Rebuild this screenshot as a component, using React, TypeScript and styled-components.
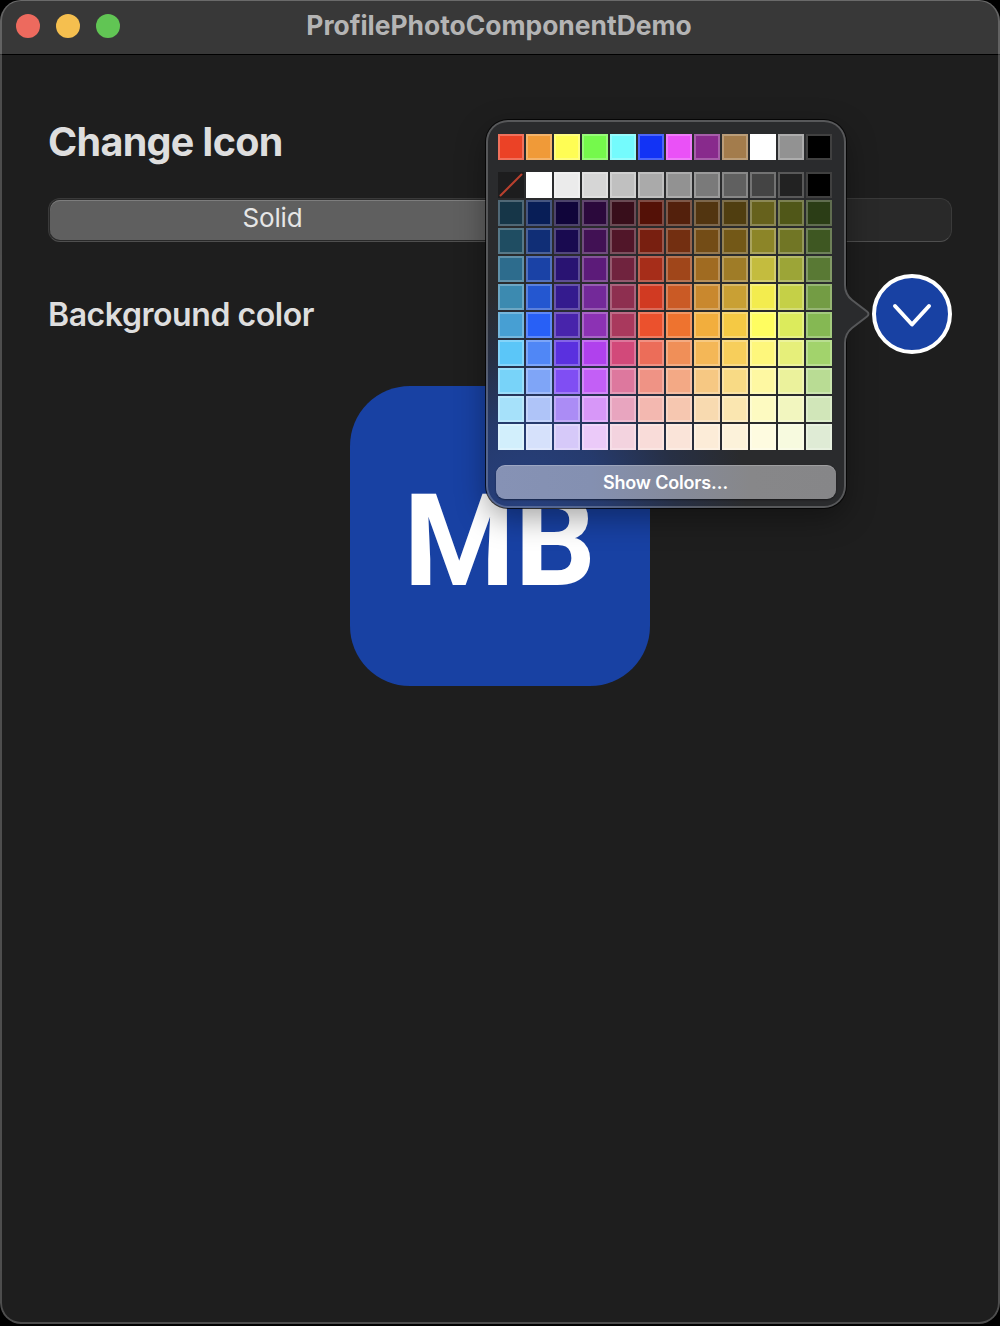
import React from "react";
import styled, { createGlobalStyle } from "styled-components";

const GlobalStyle = createGlobalStyle`
  *, *::before, *::after { box-sizing: border-box; }
  html, body { margin: 0; padding: 0; background: #000; }
  body { font-family: Inter, "Liberation Sans", sans-serif; -webkit-font-smoothing: antialiased; }
`;

const brand = "#1841a3";

const Desktop = styled.div`
  width: 1000px;
  height: 1326px;
  background: #000;
  overflow: hidden;
`;

const Window = styled.main`
  position: relative;
  width: 1000px;
  height: 1324px;
  border-radius: 21px;
  overflow: hidden;
  background: #1e1e1e;
  display: flex;
  flex-direction: column;

  &::after {
    content: "";
    position: absolute;
    inset: 0;
    border: 2px solid rgba(255, 255, 255, 0.21);
    border-top: 1px solid rgba(255, 255, 255, 0.25);
    border-radius: 21px;
    pointer-events: none;
  }
`;

const TitleBar = styled.header`
  flex: none;
  height: 55px;
  padding: 0 16px 3px;
  display: grid;
  grid-template-columns: 104px 1fr 106px;
  align-items: center;
  background: #383838;
  border-bottom: 1px solid #000;
`;

const Lights = styled.div`
  display: flex;
  gap: 16px;
`;

const Light = styled.span<{ $color: string }>`
  width: 24px;
  height: 24px;
  border-radius: 50%;
  background: ${(p) => p.$color};
`;

const Title = styled.h1`
  margin: 0;
  padding-bottom: 2px;
  text-align: center;
  font-size: 26.4px;
  line-height: 32px;
  font-weight: 700;
  color: #b4b4b4;
  white-space: nowrap;
`;

const Content = styled.section`
  padding: 65px 48px 0;
  display: flex;
  flex-direction: column;
`;

const Heading = styled.h2`
  margin: 0;
  font-size: 39.5px;
  line-height: 44px;
  font-weight: 700;
  letter-spacing: -0.7px;
  color: #dedede;
`;

const Segmented = styled.div`
  margin-top: 34px;
  height: 44px;
  padding: 1px;
  display: grid;
  grid-template-columns: 1fr 1fr;
  border: 1px solid #3a3a3a;
  border-bottom-color: #4f4f4f;
  border-radius: 12px;
  background: #292929;
`;

const Segment = styled.button<{ $active?: boolean }>`
  border: 0;
  padding: 0 5px 5px 0;
  border-radius: 10px;
  font: 400 26px/32px Inter, "Liberation Sans", sans-serif;
  letter-spacing: -0.2px;
  color: #e6e6e6;
  background: ${(p) => (p.$active ? "#5f5f5f" : "transparent")};
  box-shadow: ${(p) => (p.$active ? "inset 0 1px 0 #7d7d7d" : "none")};
`;

const SettingRow = styled.div`
  margin-top: 32px;
  height: 80px;
  display: flex;
  align-items: center;
  justify-content: space-between;
`;

const SettingLabel = styled.span`
  padding-top: 2px;
  font-size: 32px;
  line-height: 40px;
  font-weight: 600;
  letter-spacing: -0.43px;
  color: #dedede;
`;

const ColorWell = styled.button`
  width: 80px;
  height: 80px;
  padding: 2px 0 0;
  border: 4px solid #fff;
  border-radius: 50%;
  background: ${brand};
  display: flex;
  align-items: center;
  justify-content: center;
`;

const Avatar = styled.div`
  align-self: center;
  margin-top: 32px;
  width: 300px;
  height: 300px;
  border-radius: 60px;
  background: ${brand};
  color: #fff;
  display: flex;
  align-items: center;
  justify-content: center;
  font-family: Roboto, Inter, sans-serif;
  font-size: 127.5px;
  line-height: 150px;
  font-weight: 700;
  letter-spacing: -0.5px;
  padding: 12px 1px 0 0;
`;

const Popover = styled.aside`
  position: absolute;
  left: 486px;
  top: 120px;
  width: 360px;
  height: 388px;
  padding: 12px 8px 7px;
  display: flex;
  flex-direction: column;
  border: 2px solid rgba(255, 255, 255, 0.215);
  border-radius: 22px;
  background:
    radial-gradient(ellipse 220px 205px at 40px 375px, rgba(38, 65, 130, 0.95) 0%, rgba(37, 61, 120, 0.85) 35%, rgba(36, 52, 92, 0.5) 68%, rgba(43, 44, 47, 0) 100%),
    #2a2b2d;
  background-origin: border-box;
  box-shadow: 0 0 0 1px rgba(0, 0, 0, 0.75), 0 10px 30px rgba(0, 0, 0, 0.36);
`;

const Arrow = styled.svg`
  position: absolute;
  left: 354px;
  top: 155px;
`;

const Swatches = styled.div`
  display: grid;
  grid-template-columns: repeat(12, 26px);
  grid-auto-rows: 26px;
  gap: 2px;
  margin-left: 2px;

  & + & { margin-top: 12px; }
`;

const Swatch = styled.span<{ $color: string }>`
  background: ${(p) => p.$color};
  border: 2px solid rgba(255, 255, 255, 0.25);
`;

const NoColor = styled.span`
  display: flex;
  background: #1d1d1e;
`;

const ShowColors = styled.button`
  margin-top: 15px;
  height: 34px;
  width: 340px;
  padding: 2px 1px 0 0;
  border: 0;
  border-radius: 9px;
  background: linear-gradient(90deg, #8692b5 0%, #8490b1 28%, #858a99 55%, #878789 75%, #868688 100%);
  box-shadow: inset 0 1px 0 rgba(255, 255, 255, 0.2), 0 1px 2px rgba(0, 0, 0, 0.45);
  color: #fff;
  font: 600 18px/22px Inter, "Liberation Sans", sans-serif;
  letter-spacing: -0.18px;
`;

const basics = "eb4226 f09a38 fffd54 75f94c 74fbfd 1233f5 ea51f7 882a8c a37c4c ffffff 929292 000000".split(" ");

const palette = [
  "ffffff ebebeb d6d6d6 c0c0c0 aaaaaa 929292 7a7a7a 606060 444444 222222 000000",
  "163648 081e57 10053a 2b093c 380e1b 541107 53200c 523510 503e10 66611c 505718 2b3d16",
  "1f4d62 102e76 190a50 411154 511629 781f10 732f11 734c16 735817 8c8528 717625 3e5722",
  "2d6c8d 1a42a6 291372 5c1b79 70233e a62d19 a0461a a06b21 9f7c27 c4bc3e 9ca537 597934",
  "3c8ab0 2457d0 341b8e 732999 8e2f50 d13a22 ca5a25 c9882e c9a034 f3ec4e c5d047 739c44",
  "479fd3 2860f6 4824ab 8c32b4 a9395d eb512d ee732f f2ae3d f5c944 fffd60 dceb5c 85b853",
  "5bc6f8 5087f6 5a30df b041ed d2497a ec6d59 f08f58 f4b757 f7ce5b fef77c e6ef7a a2d36c",
  "78d3f9 7fa5f7 804ef3 c35ff6 dd789e ef9385 f3a985 f6c883 f8da85 fef8a2 ebf29c b9dc94",
  "a6e1fa afc4f8 ab8cf5 d797f8 e8a5bf f3b8b0 f6c7b0 f8dab0 fae6b0 fdfac1 f2f6bf d1e6b9",
  "d2effc d6e1fb d6c9f9 ebcaf9 f3d3df f9dcd9 fae4d9 fcecd8 fcf2da fefbe0 f7fadf dfebd5",
].map((row) => row.split(" "));

const colors = palette.flat();

export default function App() {
  return (
    <Desktop>
      <GlobalStyle />
      <Window>
        <TitleBar>
          <Lights>
            <Light $color="#ed6a5e" />
            <Light $color="#f5bf4f" />
            <Light $color="#61c554" />
          </Lights>
          <Title>ProfilePhotoComponentDemo</Title>
        </TitleBar>
        <Content>
          <Heading>Change Icon</Heading>
          <Segmented>
            <Segment $active>Solid</Segment>
            <Segment aria-label="Gradient" />
          </Segmented>
          <SettingRow>
            <SettingLabel>Background color</SettingLabel>
            <ColorWell aria-label="Pick background color">
              <svg width="40" height="26" viewBox="0 0 40 26" fill="none">
                <path d="M3 4 L20 22.5 L37 4" stroke="#fff" strokeWidth="4" strokeLinecap="round" strokeLinejoin="round" />
              </svg>
            </ColorWell>
          </SettingRow>
          <Avatar>MB</Avatar>
        </Content>
        <Popover>
          <Arrow width="32" height="76" viewBox="0 0 32 76" fill="none">
            <path
              d="M0 6 H3 V8 C3 15 5 19 10 23 L25 34.5 Q28 37 25 39.5 L10 51 C5 55 3 59 3 66 V70 H0 Z"
              fill="#2a2b2d"
            />
            <path
              d="M3 6 V8 C3 15 5 19 10 23 L25 34.5 Q28 37 25 39.5 L10 51 C5 55 3 59 3 66 V70"
              stroke="#57585a"
              strokeWidth="2"
            />
          </Arrow>
          <Swatches>
            {basics.map((c) => (
              <Swatch key={c} $color={`#${c}`} />
            ))}
          </Swatches>
          <Swatches>
            <NoColor>
              <svg width="26" height="26" viewBox="0 0 26 26">
                <path d="M2.5 23.5 L23.5 2.5" stroke="#b8402e" strokeWidth="2" strokeLinecap="round" />
              </svg>
            </NoColor>
            {colors.map((c, i) => (
              <Swatch key={i} $color={`#${c}`} />
            ))}
          </Swatches>
          <ShowColors>Show Colors…</ShowColors>
        </Popover>
      </Window>
    </Desktop>
  );
}
